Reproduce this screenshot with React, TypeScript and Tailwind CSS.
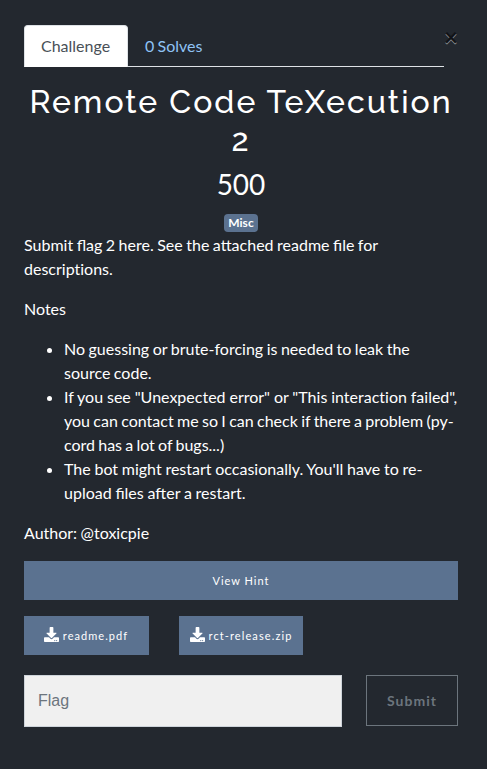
import React from "react";
import { FaDownload } from "react-icons/fa";

export default function App() {
  return (
    <main className="h-[769px] w-[487px] overflow-hidden bg-[#23282f] px-6 pt-[25px] font-['Lato',sans-serif] text-base leading-6 text-white">
      <div className="flex items-start">
        <nav className="flex h-[42px] w-[420px] border-b border-[#dee2e6]">
          <a className="h-[42px] w-[104px] rounded-t border border-[#dee2e6] border-b-white bg-white pl-4 pt-2 text-[#495057]">Challenge</a>
          <a className="pl-[17px] pt-[9px] text-[#8fc3f5] [word-spacing:-0.8px]">0 Solves</a>
        </nav>
        <button className="-mt-0.5 h-7 font-['Lato'] text-2xl leading-7 font-bold text-black opacity-50 [text-shadow:0_1px_0_#fff]">×</button>
      </div>
      <div className="w-[434px]">
        <h2 className="mt-4 text-center font-['Raleway','Lato',sans-serif] text-[32px] leading-[38.4px] font-medium tracking-[2px]">Remote Code TeXecution 2</h2>
        <h3 className="mt-2 text-center text-[28px] leading-[33.6px]">500</h3>
        <div className="mt-2 flex h-6 items-end justify-center pb-[1px]"><span className="rounded bg-[#5b7290] px-1 text-xs leading-[18px] font-bold">Misc</span></div>
        <div className="[word-spacing:-0.6px]">
          <p>Submit flag 2 here. See the attached readme file for <span className="[font-variant-ligatures:none]">descriptions.</span></p>
          <p className="mt-4">Notes</p>
          <ul className="mt-4 list-disc pl-10">
            <li>No guessing or brute-forcing is needed to leak the source code.</li>
            <li>
              <span className="[word-spacing:-0.2px]">If you see "Unexpected error" or "This <span className="[font-variant-ligatures:none]">interaction</span> failed", </span>
              <span className="[word-spacing:-0.75px]">you can contact me so I can check if there a problem (py-</span>
              <span className="[word-spacing:-0.9px]">cord has a lot of bugs...)</span>
            </li>
            <li><span className="[word-spacing:-0.35px]">The bot might restart occasionally. You'll have to re-upload files after a restart.</span></li>
          </ul>
          <p className="mt-4">Author: @toxicpie</p>
        </div>
        <button className="mt-4 h-[39px] w-full bg-[#5b7290] text-[11px] tracking-[1px]">View Hint</button>
        <div className="mt-4 flex gap-[30px]">
          <button className="flex h-[39px] w-[125px] items-center justify-center gap-1 bg-[#5b7290] pr-px text-[11px] tracking-[1.05px]"><FaDownload size={15} className="-mt-0.5" />readme.pdf</button>
          <button className="flex h-[39px] w-[124px] items-center justify-center gap-1 bg-[#5b7290] text-[11px] tracking-[1.1px]"><FaDownload size={15} className="-mt-0.5" />rct-release.zip</button>
        </div>
        <div className="mt-5 flex items-start justify-between">
          <input className="h-[52px] w-[318px] border border-[#ced4da] bg-[#f0f0f0] px-[13px] font-['Liberation_Sans',sans-serif] placeholder:text-[#6c757d]" placeholder="Flag" />
          <button className="h-[51px] w-[92px] border border-[#6c757d] text-sm font-bold tracking-[1.05px] text-[#6c757d]">Submit</button>
        </div>
      </div>
    </main>
  );
}
